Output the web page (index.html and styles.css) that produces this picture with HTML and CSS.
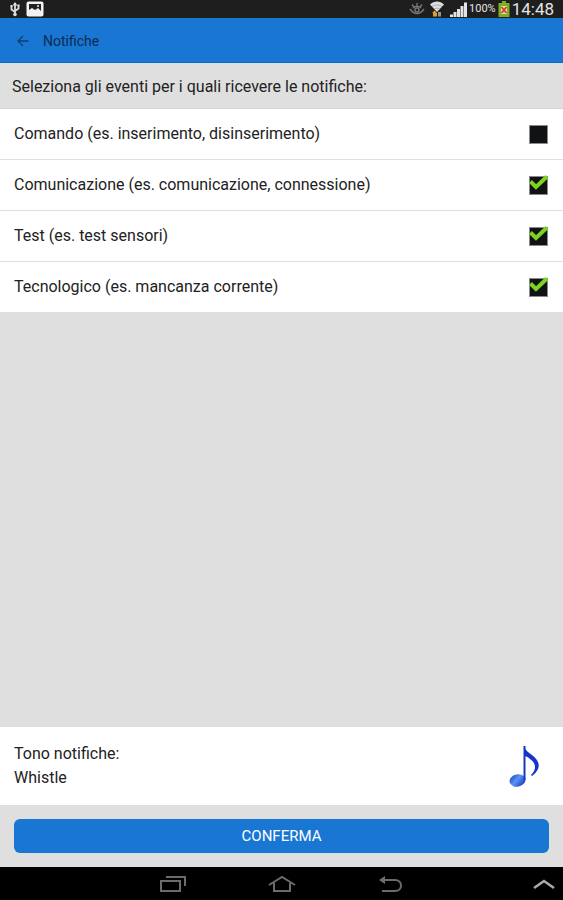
FILE: index.html
```html
<!DOCTYPE html>
<html lang="it">

<head>
    <meta charset="UTF-8">
    <meta name="viewport" content="width=device-width, initial-scale=1.0">
    <title>Notifiche</title>
    <link rel="stylesheet" href="styles.css">
</head>

<body>
    <div class="status-bar">
        <div class="status-left">
            <!-- usb -->
            <svg width="10" height="16" viewBox="0 0 10 16" fill="none" stroke="#ddd" stroke-width="1.8">
                <path d="M5 2v12M1.500 5v3.500L5 11M8.500 4v3.500L5 10" />
                <path d="M2.500 4.500L5 1l2.500 3.500z" fill="#ddd" stroke="none" />
                <circle cx="5" cy="13.500" r="1.800" fill="#ddd" stroke="none" />
                <path d="M.5 4h2v2h-2zM7.500 3.500h2v2h-2z" fill="#ddd" stroke="none" />
            </svg>
            <!-- picture -->
            <svg width="18" height="16" viewBox="0 0 18 16">
                <rect x=".5" y=".5" width="17" height="15" rx="2" fill="#f2f2f2" />
                <rect x="3" y="3" width="12" height="9" fill="#222" />
                <path d="M3 12V9l3-2 3 2 3-2 3 3v2z" fill="#f2f2f2" />
                <circle cx="12" cy="5" r="1" fill="#f2f2f2" />
            </svg>
        </div>
        <div class="status-right">
            <!-- smart stay -->
            <svg class="eye" width="16" height="16" viewBox="0 0 16 16" fill="none" stroke="#777" stroke-width="1.400">
                <path d="M1 8c4 6 10 6 14 0M4 7c2-2 6-2 8 0M8 2v3M3 3.500l2 2.500M13 3.500l-2 2.500" />
                <circle cx="8" cy="9" r="2" />
            </svg>
            <!-- wifi -->
            <svg class="wifi" width="16" height="16" viewBox="0 0 16 16">
                <path d="M1 3.500c4-4 10-4 14 0L8 11z" fill="#ddd" />
                <path d="M3 5.500c3-2 7-2 10 0M5 8c2-1 4-1 6 0" fill="none" stroke="#999" stroke-width=".7" />
                <path d="M3 12l2.500-2.500L8 12v3.500H4V12z" fill="#e59a2c" />
                <path d="M9 11h3v4.500H9z" fill="#8d9a91" />
            </svg>
            <!-- signal -->
            <svg class="signal" width="17" height="16" viewBox="0 0 17 16" fill="#e4e4e4">
                <path d="M0 13.500h3V16H0zM3.500 11h3v5h-3zM7 8h3v8H7zM10.500 5h3v11h-3zM14 1.500h3V16h-3z" />
            </svg>
            <span class="percent">100%</span>
            <!-- battery -->
            <svg class="battery" width="12" height="16" viewBox="0 0 12 16">
                <path d="M4 0h4v2h3.500v14H.5V2H4z" fill="#7fae24" />
                <rect x="3" y="5" width="6" height="8" fill="#e8dfc0" />
                <path d="M3.500 6l5 6M8.500 6l-5 6" stroke="#d03a1c" stroke-width="1.800" />
            </svg>
            <span class="clock">14:48</span>
        </div>
    </div>

    <header class="header">
        <button class="back" type="button" aria-label="Indietro">
            <svg width="12" height="12" viewBox="0 0 12 12" fill="none" stroke="#103f70" stroke-width="1.300">
                <path d="M11.500 6H1M6 1L1 6l5 5" />
            </svg>
        </button>
        <h1 class="title">Notifiche</h1>
    </header>

    <form class="content">
        <p class="caption">Seleziona gli eventi per i quali ricevere le notifiche:</p>
        <ul class="events">
            <li>
                <label class="event">
                    <span>Comando (es. inserimento, disinserimento)</span>
                    <span class="check">
                        <input type="checkbox">
                        <svg class="tick" width="22" height="22" viewBox="0 0 22 22"><path d="M3.500 7.500L9 13 20 2.500" /></svg>
                    </span>
                </label>
            </li>
            <li>
                <label class="event">
                    <span>Comunicazione (es. comunicazione, connessione)</span>
                    <span class="check">
                        <input type="checkbox" checked>
                        <svg class="tick" width="22" height="22" viewBox="0 0 22 22"><path d="M3.500 7.500L9 13 20 2.500" /></svg>
                    </span>
                </label>
            </li>
            <li>
                <label class="event">
                    <span>Test (es. test sensori)</span>
                    <span class="check">
                        <input type="checkbox" checked>
                        <svg class="tick" width="22" height="22" viewBox="0 0 22 22"><path d="M3.500 7.500L9 13 20 2.500" /></svg>
                    </span>
                </label>
            </li>
            <li>
                <label class="event">
                    <span>Tecnologico (es. mancanza corrente)</span>
                    <span class="check">
                        <input type="checkbox" checked>
                        <svg class="tick" width="22" height="22" viewBox="0 0 22 22"><path d="M3.500 7.500L9 13 20 2.500" /></svg>
                    </span>
                </label>
            </li>
        </ul>

        <button class="tone" type="button">
            <span class="tone-text">Tono notifiche:<br>Whistle</span>
            <svg width="32" height="44" viewBox="0 0 32 44">
                <defs>
                    <linearGradient id="head" x1="0" y1="0" x2="1" y2="1">
                        <stop offset="0" stop-color="#1238b8" />
                        <stop offset=".45" stop-color="#5a94f5" />
                        <stop offset="1" stop-color="#0c2bb5" />
                    </linearGradient>
                </defs>
                <ellipse cx="8.500" cy="36.500" rx="8" ry="6.200" fill="url(#head)" transform="rotate(-12 8.500 36.500)" />
                <path d="M14.500 2h2v34h-2z" fill="#1238b8" />
                <path d="M15 2c1 4 4 6 8 9 9 7 9 14 0 21l-1-1c6-6 5-12-1-16-2-2-4-3-6-3z" fill="#1334cf" />
            </svg>
        </button>

        <div class="actions">
            <button class="confirm" type="submit">CONFERMA</button>
        </div>
    </form>

    <nav class="nav-bar">
        <div class="nav-main">
            <button type="button" aria-label="Recenti">
                <svg width="28" height="18" viewBox="0 0 28 18" fill="none" stroke="#6c6c6c" stroke-width="2">
                    <path d="M2 6h19v10H2zM7 2h19v9" />
                </svg>
            </button>
            <button type="button" aria-label="Home">
                <svg width="28" height="18" viewBox="0 0 28 18" fill="none" stroke="#6c6c6c" stroke-width="2">
                    <path d="M1 10L14 2l13 8M6 8v8h16V8" />
                </svg>
            </button>
            <button type="button" aria-label="Indietro">
                <svg width="28" height="18" viewBox="0 0 28 18" fill="none" stroke="#6c6c6c" stroke-width="2">
                    <path d="M6 5h12c8 0 8 11 0 11H5" />
                    <path d="M8 1v8L2 5z" fill="#6c6c6c" stroke="none" />
                </svg>
            </button>
        </div>
        <button class="nav-up" type="button" aria-label="Apri">
            <svg width="22" height="12" viewBox="0 0 22 12" fill="none" stroke="#aaa" stroke-width="2.500">
                <path d="M1 10l10-7 10 7" />
            </svg>
        </button>
    </nav>
</body>

</html>
```
FILE: styles.css
```css
* {
    margin: 0;
    padding: 0;
    box-sizing: border-box;
    list-style: none;
}

body {
    display: flex;
    flex-direction: column;
    min-height: 100vh;
    background-color: #dfdfdf;
    color: #222;
    font-family: Roboto, "Liberation Sans", sans-serif;
    font-size: 16px;
    line-height: 24px;
}

button {
    border: none;
    background: none;
    color: inherit;
    font: inherit;
    cursor: pointer;
}

svg {
    display: block;
}

/* status bar */
.status-bar {
    display: flex;
    justify-content: space-between;
    height: 18px;
    padding: 0 9px 0 10px;
    background-color: #1e1e1e;
    color: #e4e4e4;
    line-height: 18px;
}

.status-left,
.status-right {
    display: flex;
    align-items: center;
}

.status-left {
    gap: 6px;
}

.status-right {
    gap: 2px;
}

.wifi {
    margin: 0 3px 0 2px;
}

.percent {
    font-size: 11px;
}

.clock {
    font-size: 17px;
}

/* header */
.header {
    display: flex;
    align-items: center;
    gap: 14px;
    height: 45px;
    padding: 2px 17px 0;
    background-color: #1976d2;
    border-bottom: 1px solid #0a68c8;
}

.title {
    color: #0c2c50;
    font-size: 14px;
    font-weight: 400;
}

/* events */
.content {
    display: flex;
    flex: 1;
    flex-direction: column;
}

.caption {
    padding: 12px 12px 9px;
    border-bottom: 1px solid #d4d4d4;
}

.events {
    background-color: #fff;
}

.event {
    display: flex;
    align-items: center;
    justify-content: space-between;
    height: 51px;
    padding: 0 14px;
    border-bottom: 1px solid #dfdfdf;
    cursor: pointer;
}

.check {
    display: grid;
    grid-template-columns: 22px;
    align-items: center;
    justify-items: center;
}

.check input,
.tick {
    grid-area: 1 / 1;
}

.check input {
    width: 19px;
    height: 19px;
    appearance: none;
    background-color: #111214;
    border: 1px solid #8a8a8a;
}

.tick {
    display: none;
    position: relative;
    fill: none;
    stroke: #7ed321;
    stroke-width: 4;
}

.check input:checked + .tick {
    display: block;
}

/* tone */
.tone {
    display: flex;
    align-items: center;
    justify-content: space-between;
    margin-top: auto;
    padding: 15px 22px 15px 14px;
    background-color: #fff;
    text-align: left;
}

.actions {
    padding: 14px;
}

.confirm {
    width: 100%;
    height: 34px;
    background-color: #1976d2;
    border-radius: 6px;
    color: #fff;
    font-size: 15px;
}

/* navigation bar */
.nav-bar {
    display: grid;
    grid-template-columns: 1fr auto 1fr;
    align-items: center;
    height: 33px;
    padding: 0 8px;
    background-color: #000;
}

.nav-main {
    display: flex;
    grid-column: 2;
    gap: 81px;
}

.nav-up {
    justify-self: end;
}
```
